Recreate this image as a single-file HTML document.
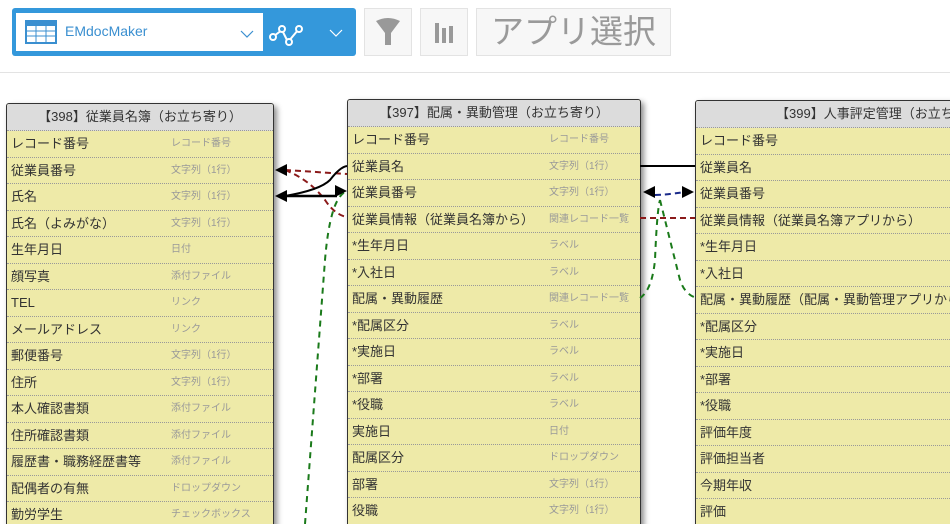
<!DOCTYPE html>
<html style="overflow:hidden;width:950px;height:524px"><head><meta charset="utf-8"><style>
html,body{overflow:hidden}
body{margin:0;width:950px;height:524px;overflow:hidden;background:#fff;font-family:"Liberation Sans","Noto Sans CJK JP",sans-serif;position:relative}
.top{position:absolute;left:0;top:0;width:950px;height:72px;border-bottom:1px solid #e3e3e3}
.sel{position:absolute;left:12px;top:8px;width:344px;height:48px;background:#3498db;border-radius:3px}
.selin{position:absolute;left:4px;top:5px;width:247px;height:38px;background:#fff}
.btn{position:absolute;top:8px;height:46px;background:#f7f7f7;border:1px solid #e3e3e3;color:#999}
.tbl{position:absolute;background:#eeeaa8;border:1px solid #333;box-shadow:3px 3px 6px rgba(0,0,0,.45);border-radius:3px 3px 0 0;overflow:hidden}
.hd{height:26px;background:#dcdcdc;text-align:center;font-size:13px;line-height:26px;color:#333;border-bottom:1px dotted #999;white-space:nowrap}
.r{height:26.5px;box-sizing:border-box;border-bottom:1px dotted #999;position:relative;font-size:13px;line-height:26px;color:#333;padding-left:4px;white-space:nowrap}
.r i{font-style:normal;position:absolute;top:0;font-size:10px;color:#999}
.t1 .r i{left:164px}.t2 .r i{left:201px}
svg.ov{position:absolute;left:0;top:0}
#wrap{position:absolute;left:0;top:0;width:950px;height:524px;overflow:hidden}
</style></head><body><div id="wrap">
<div class="top">
 <div class="sel"><div class="selin">
  <svg width="32" height="24" style="position:absolute;left:9px;top:7px"><rect x="1" y="1" width="30" height="22" fill="#fff" stroke="#3a8fd0" stroke-width="2"/><rect x="1" y="1" width="30" height="5" fill="#3a8fd0"/><g stroke="#3a8fd0" stroke-width="1"><line x1="1" y1="11" x2="31" y2="11"/><line x1="1" y1="16" x2="31" y2="16"/><line x1="11" y1="6" x2="11" y2="23"/><line x1="21" y1="6" x2="21" y2="23"/></g></svg>
  <span style="position:absolute;left:49px;top:10px;font-size:14px;color:#3a8fd0">EMdocMaker</span>
  <svg width="14" height="10" style="position:absolute;left:224px;top:16px"><path d="M1 2 L7 8 L13 2" fill="none" stroke="#3a8fd0" stroke-width="1.2"/></svg>
 </div>
  <svg width="44" height="30" style="position:absolute;left:256px;top:10px"><path d="M6 18 L14 12 L20 24 L30 12" fill="none" stroke="#fff" stroke-width="2"/><g fill="#3498db" stroke="#fff" stroke-width="2"><circle cx="5" cy="19" r="3"/><circle cx="14" cy="11" r="3"/><circle cx="21" cy="24" r="3"/><circle cx="31" cy="11" r="3"/></g></svg>
  <svg width="14" height="10" style="position:absolute;left:317px;top:20px"><path d="M1 2 L7 8 L13 2" fill="none" stroke="#fff" stroke-width="1.2"/></svg>
 </div>
 <div class="btn" style="left:364px;width:46px"><svg width="46" height="46"><path d="M11 12 Q23 6 35 12 L26 24 L26 36 L20 36 L20 24 Z" fill="#999"/></svg></div>
 <div class="btn" style="left:420px;width:46px"><svg width="46" height="46"><rect x="14" y="14" width="4" height="20" fill="#999"/><rect x="21" y="19" width="4" height="15" fill="#999"/><rect x="28" y="17" width="4" height="17" fill="#999"/></svg></div>
 <div class="btn" style="left:476px;width:193px;font-size:33px;line-height:46px;text-align:center;color:#9a9a9a">アプリ選択</div>
</div>

<div class="tbl t1" style="left:6px;top:103px;width:266px;height:440px">
<div class="hd">【398】従業員名簿（お立ち寄り）</div>
<div class="r">レコード番号<i>レコード番号</i></div>
<div class="r">従業員番号<i>文字列（1行）</i></div>
<div class="r">氏名<i>文字列（1行）</i></div>
<div class="r">氏名（よみがな）<i>文字列（1行）</i></div>
<div class="r">生年月日<i>日付</i></div>
<div class="r">顔写真<i>添付ファイル</i></div>
<div class="r">TEL<i>リンク</i></div>
<div class="r">メールアドレス<i>リンク</i></div>
<div class="r">郵便番号<i>文字列（1行）</i></div>
<div class="r">住所<i>文字列（1行）</i></div>
<div class="r">本人確認書類<i>添付ファイル</i></div>
<div class="r">住所確認書類<i>添付ファイル</i></div>
<div class="r">履歴書・職務経歴書等<i>添付ファイル</i></div>
<div class="r">配偶者の有無<i>ドロップダウン</i></div>
<div class="r">勤労学生<i>チェックボックス</i></div>
</div>

<div class="tbl t2" style="left:347px;top:99px;width:292px;height:440px">
<div class="hd">【397】配属・異動管理（お立ち寄り）</div>
<div class="r">レコード番号<i>レコード番号</i></div>
<div class="r">従業員名<i>文字列（1行）</i></div>
<div class="r">従業員番号<i>文字列（1行）</i></div>
<div class="r">従業員情報（従業員名簿から）<i>関連レコード一覧</i></div>
<div class="r">*生年月日<i>ラベル</i></div>
<div class="r">*入社日<i>ラベル</i></div>
<div class="r">配属・異動履歴<i>関連レコード一覧</i></div>
<div class="r">*配属区分<i>ラベル</i></div>
<div class="r">*実施日<i>ラベル</i></div>
<div class="r">*部署<i>ラベル</i></div>
<div class="r">*役職<i>ラベル</i></div>
<div class="r">実施日<i>日付</i></div>
<div class="r">配属区分<i>ドロップダウン</i></div>
<div class="r">部署<i>文字列（1行）</i></div>
<div class="r">役職<i>文字列（1行）</i></div>
</div>

<div class="tbl" style="left:695px;top:100px;width:300px;height:440px">
<div class="hd" style="text-align:left;padding-left:80px">【399】人事評定管理（お立ち寄り）</div>
<div class="r">レコード番号</div>
<div class="r">従業員名</div>
<div class="r">従業員番号</div>
<div class="r">従業員情報（従業員名簿アプリから）</div>
<div class="r">*生年月日</div>
<div class="r">*入社日</div>
<div class="r">配属・異動履歴（配属・異動管理アプリから）</div>
<div class="r">*配属区分</div>
<div class="r">*実施日</div>
<div class="r">*部署</div>
<div class="r">*役職</div>
<div class="r">評価年度</div>
<div class="r">評価担当者</div>
<div class="r">今期年収</div>
<div class="r">評価</div>
</div>

<svg class="ov" width="950" height="524">
<g fill="none" stroke-width="2">
<path d="M285 170 L347 174 M285 170 Q310 180 325 200 Q335 215 347 217" stroke="#8b1a1a" stroke-dasharray="6,4"/>
<path d="M285 196 Q320 190 330 180 Q340 167 347 166" stroke="#000"/>
<path d="M285 196 L337 196" stroke="#000" stroke-width="2.5"/>
<path d="M305 524 L325 260 Q330 200 345 192" stroke="#1a7a1a" stroke-dasharray="6,5"/>
<path d="M640 166 L695 166" stroke="#000"/>
<path d="M655 195 Q665 195 685 192" stroke="#1a2a8a" stroke-dasharray="6,4"/>
<path d="M640 218 L695 218" stroke="#8b1a1a" stroke-dasharray="6,4"/>
<path d="M640 298 Q652 290 655 260 Q657 210 660 200 M660 200 Q670 240 680 280 Q685 295 697 298" stroke="#1a7a1a" stroke-dasharray="6,5"/>
</g>
<g fill="#000">
<path d="M275 170 L287 164 L287 176 Z"/><path d="M275 196 L287 190 L287 202 Z"/>
<path d="M347 191 L335 185 L335 197 Z"/>
<path d="M643 192 L655 186 L655 198 Z"/><path d="M694 192 L682 186 L682 198 Z"/>
</g>
</svg>
</div></body></html>
